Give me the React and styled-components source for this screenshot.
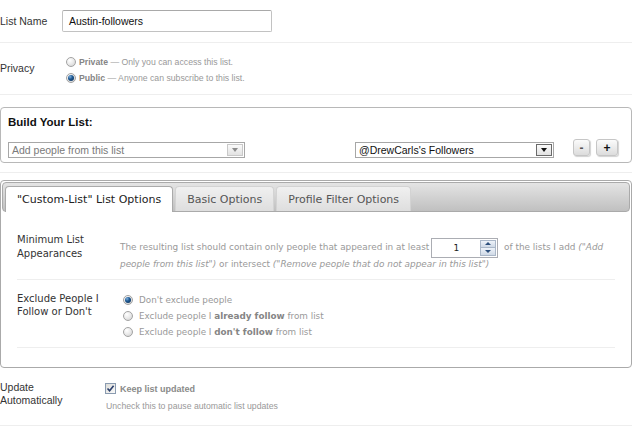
import styled, { createGlobalStyle, css } from "styled-components";

const GlobalStyle = createGlobalStyle`
  html, body {
    margin: 0;
    padding: 0;
    background: #fff;
  }
  body {
    font-family: "Liberation Sans", Arial, sans-serif;
    color: #333;
  }
`;

const Page = styled.div`
  width: 632px;
`;

const FieldRow = styled.div`
  display: flex;
  align-items: ${(p) => p.$align || "flex-start"};
  padding: ${(p) => p.$pad};
  border-bottom: 1px solid #eee;
`;

const Label = styled.div`
  width: ${(p) => p.$w}px;
  flex-shrink: 0;
  font-size: 10.5px;
  line-height: ${(p) => p.$lh || 13}px;
  padding-top: ${(p) => p.$top || 0}px;
  color: #333;
`;

const TextInput = styled.div`
  box-sizing: border-box;
  width: 210px;
  height: 22px;
  border: 1px solid #c2c2c2;
  border-top-color: #a9a9a9;
  border-radius: 2px;
  padding-left: 6px;
  display: flex;
  align-items: center;
  font-size: 10.5px;
  color: #111;
`;

const RadioGroup = styled.div`
  padding-left: ${(p) => p.$indent || 0}px;
  display: flex;
  flex-direction: column;
`;

const RadioLine = styled.label`
  display: flex;
  align-items: center;
  gap: ${(p) => p.$gap || 3}px;
  height: 16px;
  font-size: ${(p) => p.$size || 8.7}px;
  font-family: ${(p) =>
    p.$verdana
      ? '"DejaVu Sans", Verdana, sans-serif'
      : '"Liberation Sans", Arial, sans-serif'};
  color: #999;
  white-space: nowrap;

  b {
    color: #858585;
    font-weight: bold;
  }
`;

const Radio = styled.span`
  box-sizing: border-box;
  width: 10px;
  height: 10px;
  border-radius: 50%;
  border: 1px solid #a3a3a3;
  background: radial-gradient(circle at 35% 30%, #fff 0%, #ececec 45%, #cdcdcd 100%);
  position: relative;
  flex-shrink: 0;

  ${(p) =>
    p.$checked &&
    css`
      &::after {
        content: "";
        position: absolute;
        left: 1px;
        top: 1px;
        width: 6px;
        height: 6px;
        border-radius: 50%;
        background: radial-gradient(circle at 35% 30%, #7fb0de 0%, #1f5a94 40%, #0a2a4f 100%);
      }
    `}
`;

const BuildPanel = styled.section`
  margin-top: 12px;
  border: 1px solid #b8b8b8;
  border-radius: 4px;
  padding: 7px 13px 4px 7px;
`;

const PanelTitle = styled.h3`
  margin: 0;
  font-size: 11.5px;
  line-height: 14px;
  font-weight: bold;
  color: #111;
`;

const ControlsRow = styled.div`
  margin-top: 10px;
  height: 19px;
  display: flex;
  align-items: flex-start;
`;

const SelectBox = styled.div`
  box-sizing: border-box;
  margin-top: 3px;
  margin-left: ${(p) => p.$offset || 0}px;
  width: ${(p) => p.$w}px;
  height: 16px;
  border: 1px solid #a7a7a7;
  background: #fff;
  display: flex;
  align-items: center;
  justify-content: space-between;
  padding-left: 3px;
  font-size: 10.5px;
  color: ${(p) => (p.$muted ? "#7a7a7a" : "#111")};
`;

const SelectArrow = styled.span`
  box-sizing: border-box;
  width: 16px;
  height: 12px;
  margin-right: 1px;
  border: 1px solid ${(p) => (p.$muted ? "#c9c9c9" : "#6a6a6a")};
  background: linear-gradient(#fafafa, #e2e2e2);
  display: flex;
  align-items: center;
  justify-content: center;

  &::after {
    content: "";
    border-left: 3.5px solid transparent;
    border-right: 3.5px solid transparent;
    border-top: 4px solid ${(p) => (p.$muted ? "#8c8c8c" : "#111")};
  }
`;

const SmallButton = styled.button`
  box-sizing: border-box;
  margin-left: ${(p) => p.$offset}px;
  width: ${(p) => p.$w}px;
  height: 17px;
  padding: 0;
  border: 1px solid #c6c6c6;
  border-radius: 3px;
  background: linear-gradient(#fbfbfb, #dcdcdc);
  box-shadow: 1px 1px 1px rgba(0, 0, 0, 0.18);
  font-family: "Liberation Sans", Arial, sans-serif;
  font-size: 12px;
  font-weight: bold;
  line-height: 14px;
  color: ${(p) => p.$color};
`;

const Divider = styled.hr`
  margin: 9px 0 0;
  border: 0;
  border-top: 1px solid #eee;
`;

const TabPanel = styled.section`
  margin-top: 7px;
  border: 1px solid #aaa;
  border-radius: 4px;
  padding: 1px;
  font-family: "DejaVu Sans", Verdana, sans-serif;
`;

const TabHeader = styled.div`
  display: flex;
  gap: 2px;
  padding: 3px 2px 0;
  border: 1px solid #aaa;
  border-radius: 4px;
  background: linear-gradient(#e4e4e4, #c0c0c0);
`;

const Tab = styled.div`
  box-sizing: border-box;
  height: ${(p) => (p.$active ? 26 : 25)}px;
  margin-bottom: ${(p) => (p.$active ? -1 : 0)}px;
  padding: 0 11px;
  display: flex;
  align-items: center;
  padding-bottom: ${(p) => (p.$active ? 1 : 0)}px;
  border: 1px solid ${(p) => (p.$active ? "#aaa" : "#d3d3d3")};
  border-bottom: 0;
  border-radius: 4px 4px 0 0;
  background: ${(p) => (p.$active ? "#fff" : "linear-gradient(#f0f0f0, #dedede)")};
  font-size: 11px;
  color: ${(p) => (p.$active ? "#222" : "#555")};
  white-space: nowrap;
`;

const TabContent = styled.div`
  padding: 18px 15px 18px;
`;

const OptionRow = styled.div`
  display: flex;
  padding: ${(p) => p.$pad};
  border-bottom: 1px solid #eee;
`;

const OptionLabel = styled.div`
  width: 103px;
  flex-shrink: 0;
  font-size: 10px;
  line-height: ${(p) => p.$lh}px;
  padding-top: ${(p) => p.$top || 0}px;
  color: #333;
`;

const Description = styled.div`
  flex: 1;
  padding-top: 6px;
  font-size: 8.9px;
  line-height: 16px;
  color: #999;

  em {
    font-style: italic;
  }
`;

const SpinInput = styled.span`
  box-sizing: border-box;
  display: inline-flex;
  vertical-align: middle;
  width: 67px;
  height: 20px;
  margin: -2px 3px -2px 2px;
  border: 1px solid #abadb3;
  background: #fff;
`;

const SpinValue = styled.span`
  flex: 1;
  display: flex;
  align-items: center;
  justify-content: center;
  font-size: 9px;
  color: #222;
`;

const SpinButtons = styled.span`
  width: 14px;
  display: flex;
  flex-direction: column;
  margin: 1px 1px 1px 0;
  border: 1px solid #aab7c8;
`;

const SpinArrow = styled.span`
  flex: 1;
  display: flex;
  align-items: center;
  justify-content: center;
  background: linear-gradient(#eef3f9, #cfd9e6);
  border-top: ${(p) => (p.$down ? "1px solid #aab7c8" : "0")};

  &::after {
    content: "";
    border-left: 3px solid transparent;
    border-right: 3px solid transparent;
    ${(p) =>
      p.$down
        ? "border-top: 3px solid #2c4f7c;"
        : "border-bottom: 3px solid #2c4f7c;"}
  }
`;

const CheckColumn = styled.div`
  display: flex;
  flex-direction: column;
`;

const CheckLine = styled.label`
  display: flex;
  align-items: center;
  height: 16px;
  gap: 4px;
  font-size: 9px;
  font-weight: bold;
  color: #8a8a8a;
`;

const CheckBox = styled.span`
  box-sizing: border-box;
  width: 11px;
  height: 11px;
  border: 1px solid #8a9bb0;
  background: linear-gradient(135deg, #dcdcd8, #fafafa);
  display: flex;
  align-items: center;
  justify-content: center;
`;

const Hint = styled.div`
  margin-top: 2px;
  padding-left: 1px;
  font-size: 8.7px;
  line-height: 15px;
  color: #999;
`;

export default function App() {
  return (
    <>
      <GlobalStyle />
      <Page>
        <FieldRow $align="center" $pad="10px 0 10px">
          <Label $w={62}>List Name</Label>
          <TextInput>Austin-followers</TextInput>
        </FieldRow>

        <FieldRow $pad="11px 0 8px">
          <Label $w={62} $lh={14} $top={7}>
            Privacy
          </Label>
          <RadioGroup $indent={4}>
            <RadioLine>
              <Radio />
              <span>
                <b>Private</b> — Only you can access this list.
              </span>
            </RadioLine>
            <RadioLine>
              <Radio $checked />
              <span>
                <b>Public</b> — Anyone can subscribe to this list.
              </span>
            </RadioLine>
          </RadioGroup>
        </FieldRow>

        <BuildPanel>
          <PanelTitle>Build Your List:</PanelTitle>
          <ControlsRow>
            <SelectBox $w={237} $muted>
              Add people from this list
              <SelectArrow $muted />
            </SelectBox>
            <SelectBox $w={199} $offset={110}>
              @DrewCarls's Followers
              <SelectArrow />
            </SelectBox>
            <SmallButton $w={17} $offset={19} $color="#555">
              -
            </SmallButton>
            <SmallButton $w={22} $offset={6} $color="#111">
              +
            </SmallButton>
          </ControlsRow>
        </BuildPanel>

        <Divider />

        <TabPanel>
          <TabHeader>
            <Tab $active>"Custom-List" List Options</Tab>
            <Tab>Basic Options</Tab>
            <Tab>Profile Filter Options</Tab>
          </TabHeader>
          <TabContent>
            <OptionRow $pad="3px 0 7px">
              <OptionLabel $lh={14}>
                Minimum List
                <br />
                Appearances
              </OptionLabel>
              <Description>
                The resulting list should contain only people that appeared in at least
                <SpinInput>
                  <SpinValue>1</SpinValue>
                  <SpinButtons>
                    <SpinArrow />
                    <SpinArrow $down />
                  </SpinButtons>
                </SpinInput>{" "}
                of the lists I add <em>("Add</em>
                <br />
                <em>people from this list")</em> or intersect{" "}
                <em>("Remove people that do not appear in this list")</em>
              </Description>
            </OptionRow>

            <OptionRow $pad="12px 0 7px">
              <OptionLabel $lh={13}>
                Exclude People I
                <br />
                Follow or Don't
              </OptionLabel>
              <RadioGroup $indent={3}>
                <RadioLine $verdana $size={8.8} $gap={6}>
                  <Radio $checked />
                  <span>Don't exclude people</span>
                </RadioLine>
                <RadioLine $verdana $size={8.8} $gap={6}>
                  <Radio />
                  <span>
                    Exclude people I <b>already follow</b> from list
                  </span>
                </RadioLine>
                <RadioLine $verdana $size={8.8} $gap={6}>
                  <Radio />
                  <span>
                    Exclude people I <b>don't follow</b> from list
                  </span>
                </RadioLine>
              </RadioGroup>
            </OptionRow>
          </TabContent>
        </TabPanel>

        <FieldRow $pad="13px 0 11px">
          <Label $w={105}>
            Update
            <br />
            Automatically
          </Label>
          <CheckColumn>
            <CheckLine>
              <CheckBox>
                <svg width="9" height="9" viewBox="0 0 9 9">
                  <path d="M1.5 4.5 L3.6 6.8 L7.6 1.8" fill="none" stroke="#2b3f6b" strokeWidth="1.6" />
                </svg>
              </CheckBox>
              Keep list updated
            </CheckLine>
            <Hint>Uncheck this to pause automatic list updates</Hint>
          </CheckColumn>
        </FieldRow>
      </Page>
    </>
  );
}
